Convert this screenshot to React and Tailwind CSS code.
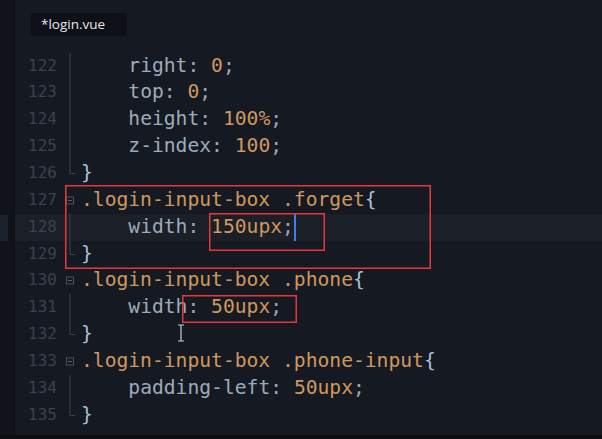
import React from "react";

const P = "text-[#9dabbb]"; // property
const V = "text-[#d0975e]"; // value / selector
const B = "text-[#a9c1dc]"; // braces
const G = "text-[#9aa6b4]"; // punctuation

const rows = [
  { n: 122, fold: "line", code: [["    ", ""], ["right", P], [": ", G], ["0", V], [";", G]] },
  { n: 123, fold: "line", code: [["    ", ""], ["top", P], [": ", G], ["0", V], [";", G]] },
  { n: 124, fold: "line", code: [["    ", ""], ["height", P], [": ", G], ["100%", V], [";", G]] },
  { n: 125, fold: "line", code: [["    ", ""], ["z-index", P], [": ", G], ["100", V], [";", G]] },
  { n: 126, fold: "end", code: [["}", B]] },
  { n: 127, fold: "box", code: [[".login-input-box .forget", V], ["{", B]] },
  { n: 128, fold: "line", active: true, cursor: true, code: [["    ", ""], ["width", P], [": ", G], ["150upx", V], [";", G]] },
  { n: 129, fold: "end", code: [["}", B]] },
  { n: 130, fold: "box", code: [[".login-input-box .phone", V], ["{", B]] },
  { n: 131, fold: "line", code: [["    ", ""], ["width", P], [": ", G], ["50upx", V], [";", G]] },
  { n: 132, fold: "end", code: [["}", B]] },
  { n: 133, fold: "box", code: [[".login-input-box .phone-input", V], ["{", B]] },
  { n: 134, fold: "line", code: [["    ", ""], ["padding-left", P], [": ", G], ["50upx", V], [";", G]] },
  { n: 135, fold: "end", code: [["}", B]] },
];

function Fold({ type }) {
  const s = "#3d444f";
  return (
    <svg width="24" height="26.85" viewBox="0 0 24 26.85" className="shrink-0">
      {type === "line" && <line x1="13" y1="0" x2="13" y2="26.85" stroke={s} strokeWidth="1" />}
      {type === "end" && (
        <path d="M13 0 V13.5 H18" fill="none" stroke={s} strokeWidth="1" />
      )}
      {type === "box" && (
        <g>
          <rect x="9.5" y="10" width="7" height="7" fill="none" stroke="#4a515c" strokeWidth="1" />
          <line x1="11" y1="13.5" x2="15" y2="13.5" stroke="#5a626e" strokeWidth="1" />
        </g>
      )}
    </svg>
  );
}

function RedBox({ className }) {
  return (
    <div
      className={`absolute ${className}`}
      style={{ boxShadow: "inset 0 0 0 1.5px #e8363c" }}
    />
  );
}

export default function App() {
  return (
    <div className="relative w-[602px] h-[439px] overflow-hidden bg-[#151a22] flex flex-col">
      <div className="flex flex-1 min-h-0">
        {/* left strip */}
        <div className="w-[15px] shrink-0 bg-[#10141a] border-r border-[#0b0e12] flex flex-col">
          <div className="h-[215px]" />
          <div className="h-[26px] w-[8px] bg-[#1c222b]" />
        </div>
        {/* main */}
        <div className="flex-1 flex flex-col min-w-0">
          <div className="h-[52.6px] shrink-0 pt-[13px] pl-[16px]">
            <div
              className="w-[96px] h-[23px] bg-[#0d1016] text-[#e8e8e8] text-[13.5px] leading-[23px] pl-[10px]"
              style={{ fontFamily: '"Open Sans", "Noto Sans", sans-serif' }}
            >
              *login.vue
            </div>
          </div>
          <div className="flex flex-col">
            {rows.map((r) => (
              <div
                key={r.n}
                className={`flex h-[26.85px] items-stretch ${r.active ? "bg-[#1a1f28]" : ""}`}
              >
                <div
                  className="w-[42px] shrink-0 text-right text-[16px] leading-[26.85px] text-[#3b424d]"
                  style={{ fontFamily: '"DejaVu Sans Mono", monospace' }}
                >
                  {r.n}
                </div>
                <Fold type={r.fold} />
                <div
                  className="flex items-stretch whitespace-pre text-[19.65px] leading-[26.85px]"
                  style={{ fontFamily: '"DejaVu Sans Mono", monospace' }}
                >
                  {r.code.map(([t, c], i) => (
                    <span key={i} className={c}>
                      {t}
                    </span>
                  ))}
                  {r.cursor && <span className="w-[2px] bg-[#3f7fe6]" />}
                </div>
              </div>
            ))}
          </div>
        </div>
      </div>
      <div className="h-[4px] shrink-0 bg-[#0a0d11]" />

      {/* red annotation boxes */}
      <RedBox className="left-[65px] top-[185px] w-[366px] h-[84px]" />
      <RedBox className="left-[209px] top-[213px] w-[116px] h-[38px]" />
      <RedBox className="left-[182px] top-[295px] w-[115px] h-[28px]" />

      {/* I-beam mouse cursor */}
      <svg className="absolute left-[176px] top-[324px]" width="10" height="18" viewBox="0 0 10 18">
        <path d="M2 1 H8 M5 1 V17 M2 17 H8" stroke="#c8ccd2" strokeWidth="1.2" fill="none" />
      </svg>
    </div>
  );
}
